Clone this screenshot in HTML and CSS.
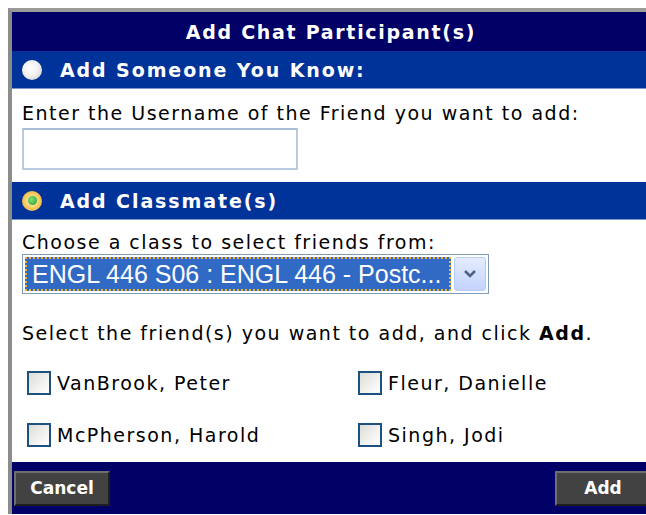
FILE: index.html
```html
<!DOCTYPE html>
<html>
<head>
<meta charset="utf-8">
<title>Add Chat Participant(s)</title>
<link rel="stylesheet" href="styles.css">
</head>
<body>
<div class="panel">
  <div class="title">Add Chat Participant(s)</div>

  <div class="section">
    <span class="radio"></span>
    <span class="section-label">Add Someone You Know:</span>
  </div>
  <div class="body body-friend">
    <div class="line">Enter the Username of the Friend you want to add:</div>
    <div class="textbox"></div>
  </div>

  <div class="section">
    <span class="radio radio-on"><span class="dot"></span></span>
    <span class="section-label">Add Classmate(s)</span>
  </div>
  <div class="body body-class">
    <div class="line">Choose a class to select friends from:</div>
    <div class="select">
      <div class="select-value"><span>ENGL 446 S06 : ENGL 446 - Postc...</span></div>
      <div class="select-btn">
        <svg width="14" height="10" viewBox="0 0 14 10"><path d="M2 2 L7 7 L12 2" fill="none" stroke="#4d6185" stroke-width="2.6"/></svg>
      </div>
    </div>
    <div class="line hint">Select the friend(s) you want to add, and click <b>Add</b>.</div>
    <div class="friends">
      <label class="friend"><span class="check"></span>VanBrook, Peter</label>
      <label class="friend"><span class="check"></span>Fleur, Danielle</label>
      <label class="friend"><span class="check"></span>McPherson, Harold</label>
      <label class="friend"><span class="check"></span>Singh, Jodi</label>
    </div>
  </div>

  <div class="footer">
    <span class="btn btn-cancel">Cancel</span>
    <span class="btn btn-add">Add</span>
  </div>
</div>
</body>
</html>
```

FILE: styles.css
```css
html, body {
  margin: 0;
  padding: 0;
  background: #ffffff;
  overflow: hidden;
}

body {
  font-family: "DejaVu Sans", Verdana, sans-serif;
  color: #000;
}

.panel {
  margin: 8px 0 0 8px;
  width: 645px;
  border-left: 4px solid #8c8c8c;
  border-top: 4px solid #9a9a9a;
  background: #fff;
}

.title {
  height: 39px;
  background: #000066;
  color: #fff;
  font-weight: bold;
  font-size: 19px;
  letter-spacing: 1.7px;
  display: flex;
  align-items: center;
  justify-content: center;
  padding-right: 7px;
}

.section {
  height: 37px;
  background: #003399;
  border-bottom: 1px solid #7d96cf;
  display: flex;
  align-items: center;
  padding-left: 10px;
  color: #fff;
  font-weight: bold;
  font-size: 19px;
  letter-spacing: 1.9px;
}

.radio {
  width: 20px;
  height: 20px;
  border-radius: 50%;
  background: radial-gradient(circle at 40% 40%, #ffffff 0%, #f2f2f2 45%, #c8c8c8 100%);
  margin-right: 18px;
  display: flex;
  align-items: center;
  justify-content: center;
  flex: none;
}

.radio-on {
  background: radial-gradient(circle, #fff6c8 0%, #f5c95a 55%, #e0a030 100%);
}

.dot {
  width: 9px;
  height: 9px;
  border-radius: 50%;
  background: radial-gradient(circle at 40% 40%, #7fe07a, #1f9a2a);
}

.body {
  padding: 0 10px;
  font-size: 19px;
  letter-spacing: 1.5px;
}

.line {
  height: 22px;
  line-height: 22px;
  white-space: nowrap;
}

.body-friend {
  padding-top: 13px;
  padding-bottom: 12px;
}

.textbox {
  margin-top: 4px;
  width: 272px;
  height: 38px;
  border: 2px solid #b9cbe0;
  border-top-color: #a9bed6;
  background: #fff;
}

.body-class {
  padding-top: 11px;
  padding-bottom: 12px;
}

.select {
  margin-top: 1px;
  width: 461px;
  height: 34px;
  border: 1px solid #7f9db9;
  display: flex;
  align-items: stretch;
  padding: 2px;
  box-sizing: content-box;
  gap: 3px;
}

.select-value {
  flex: 1;
  background: #316ac5;
  outline: 2px dotted #f0b030;
  outline-offset: -2px;
  display: flex;
  align-items: center;
  padding-left: 7px;
  font-family: "Liberation Sans", Arial, sans-serif;
  font-size: 25px;
  letter-spacing: 0;
  color: #fff;
  white-space: nowrap;
  overflow: hidden;
}

.select-btn {
  width: 30px;
  border-radius: 3px;
  background: linear-gradient(#e4ecfe, #c3d3fd);
  border: 1px solid #b8c9f3;
  display: flex;
  align-items: center;
  justify-content: center;
}

.hint {
  margin-top: 28px;
}

.friends {
  display: grid;
  grid-template-columns: 331px auto;
  row-gap: 28px;
  margin-top: 27px;
  padding-left: 5px;
}

.friend {
  display: flex;
  align-items: center;
  height: 24px;
  white-space: nowrap;
}

.check {
  width: 20px;
  height: 20px;
  border: 2px solid #1c5180;
  background: linear-gradient(135deg, #dcdcd7, #f6f6f4 70%, #ffffff);
  margin-right: 6px;
  flex: none;
}

.footer {
  margin-top: 3px;
  height: 52px;
  background: #000066;
  display: flex;
  align-items: center;
  justify-content: space-between;
  padding: 0 2px;
}

.btn {
  height: 31px;
  background: #424242;
  border: 2px solid;
  border-color: #6e6e6e #1e1e1e #1e1e1e #6e6e6e;
  color: #fff;
  font-weight: bold;
  font-size: 17px;
  display: flex;
  align-items: center;
  justify-content: center;
}

.btn-cancel {
  width: 92px;
}

.btn-add {
  width: 92px;
  margin-right: 4px;
}
```
